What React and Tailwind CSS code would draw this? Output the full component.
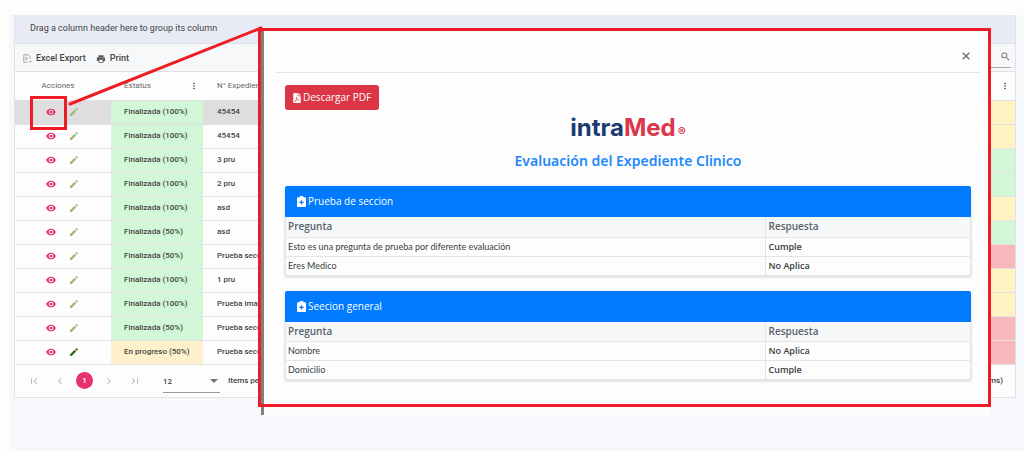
import React from "react";
import { MdSearch, MdPrint, MdMoreVert, MdFirstPage, MdLastPage, MdChevronLeft, MdChevronRight } from "react-icons/md";
import { FaFilePdf } from "react-icons/fa";

const rows = [
  { status: "Finalizada (100%)", file: "45454", flag: "yellow" },
  { status: "Finalizada (100%)", file: "45454", flag: "yellow" },
  { status: "Finalizada (100%)", file: "3 pru", flag: "green" },
  { status: "Finalizada (100%)", file: "2 pru", flag: "green" },
  { status: "Finalizada (100%)", file: "asd", flag: "yellow" },
  { status: "Finalizada (50%)", file: "asd", flag: "green" },
  { status: "Finalizada (50%)", file: "Prueba seccion", flag: "red" },
  { status: "Finalizada (100%)", file: "1 pru", flag: "yellow" },
  { status: "Finalizada (100%)", file: "Prueba imagen", flag: "yellow" },
  { status: "Finalizada (50%)", file: "Prueba seccion", flag: "red" },
  { status: "En progreso (50%)", file: "Prueba seccion", flag: "red", open: true },
];

const flags = { yellow: "bg-[#fff3c1]", green: "bg-[#d2f7d6]", red: "bg-[#f9b9bc]" };

const sections = [
  {
    title: "Prueba de seccion",
    items: [
      ["Esto es una pregunta de prueba por diferente evaluación", "Cumple"],
      ["Eres Medico", "No Aplica"],
    ],
  },
  {
    title: "Seecion general",
    items: [
      ["Nombre", "No Aplica"],
      ["Domicilio", "Cumple"],
    ],
  },
];

function ExcelIcon() {
  return (
    <svg viewBox="0 0 16 16" className="size-[9px]" fill="none" stroke="#888" strokeWidth="1.3">
      <path d="M12.500 9V4.500L9.500 1.500H1.500v13h7M4 5.500l4 5M8 5.500l-4 5M10.500 13.500h5" />
    </svg>
  );
}

function EyeIcon() {
  return (
    <svg viewBox="0 0 24 24" className="size-[10px]" fill="#e3306b">
      <path d="M12 4C6.500 4 2.200 7.300.5 12c1.700 4.700 6 8 11.500 8s9.800-3.300 11.500-8C21.800 7.300 17.500 4 12 4zm0 13.500a5.500 5.500 0 1 1 0-11 5.500 5.500 0 0 1 0 11zm0-8.700a3.200 3.200 0 1 0 0 6.400 3.200 3.200 0 0 0 0-6.400z" />
    </svg>
  );
}

function PencilIcon() {
  return (
    <svg viewBox="0 0 18 18" className="size-2" fill="currentColor">
      <path d="M0 14.200V18h3.800L14 7.800 10.200 4zM17.700 4.100a1 1 0 0 0 0-1.400L15.300.3a1 1 0 0 0-1.400 0L11.600 2.600l3.800 3.800z" />
    </svg>
  );
}

function ClipboardIcon() {
  return (
    <svg viewBox="0 0 18 22" className="h-[11px] w-[9px]" aria-hidden="true">
      <path fill="#fff" fillRule="evenodd" d="M5 2.500A2.500 2.500 0 0 1 7.500 0h3A2.500 2.500 0 0 1 13 2.500h3A2 2 0 0 1 18 4.500V20a2 2 0 0 1-2 2H2a2 2 0 0 1-2-2V4.500a2 2 0 0 1 2-2zM7.700 8.500v3H4.700v2.600h3v3h2.600v-3h3v-2.600h-3v-3z" />
    </svg>
  );
}

function Section({ title, items }) {
  return (
    <section className="rounded-[2px] shadow-[0_1px_3px_rgba(0,0,0,0.18)]">
      <h3 className="flex h-[31px] items-center gap-[2px] rounded-t-[2px] bg-[#007bff] px-3 text-[10px] font-medium text-white">
        <ClipboardIcon />
        {title}
      </h3>
      <table className="w-full table-fixed border-collapse text-left text-[#383d42]">
        <thead>
          <tr className="h-5 bg-[#f6f7f9] text-[10px] text-[#5b6168]">
            <th className="w-[70%] border border-t-0 border-[#e2e5ea] px-[2px] py-0 font-semibold">Pregunta</th>
            <th className="border border-t-0 border-[#e2e5ea] px-[3px] py-0 font-semibold">Respuesta</th>
          </tr>
        </thead>
        <tbody className="text-[9px]">
          {items.map(([question, answer]) => (
            <tr key={question} className="h-[19px]">
              <td className="border border-[#e2e5ea] px-[2px] py-0 font-['Lato',sans-serif]">{question}</td>
              <td className="border border-[#e2e5ea] px-[3px] py-0 font-semibold">{answer}</td>
            </tr>
          ))}
        </tbody>
      </table>
    </section>
  );
}

function Dialog() {
  return (
    <div className="absolute top-[28px] right-[33px] left-[258px] font-['Open_Sans',sans-serif]">
      <div role="dialog" aria-label="Evaluación del Expediente Clinico" className="border-[3px] border-[#ee1c25] bg-[#fdfdfd]">
        <div className="border-l-[3px] border-[#808080] pr-[7px] pb-6 pl-[11px]">
          <header className="flex h-[42px] items-center justify-end border-b border-[#e3e7f3] pt-2 pr-[11px]">
            <button type="button" aria-label="Cerrar">
              <svg viewBox="0 0 8 8" className="size-2" stroke="#777" strokeWidth="1.6">
                <path d="M.7.7l6.600 6.600M7.300.7L.7 7.300" />
              </svg>
            </button>
          </header>
          <div className="px-[10px] pt-3">
            <button type="button" className="flex h-[25px] items-center gap-[2px] rounded-[3px] bg-[#dc3545] px-2 text-[10px] font-medium text-white">
              <FaFilePdf className="h-[10px] w-2" />
              Descargar PDF
            </button>
            <div className="mt-[6px] flex h-6 items-center justify-center font-['Inter',sans-serif] text-[24px] font-bold text-[#1b3a70]">
              intra<span className="text-[#dc3648]">Med</span>
              <span className="mt-2 ml-[2px] text-[12px] text-[#dc3648]">®</span>
            </div>
            <h2 className="mt-[10px] mb-[14px] text-center font-['Noto_Sans',sans-serif] text-[14px] leading-[22px] font-semibold text-[#1e88fb]">Evaluación del Expediente Clinico</h2>
            <div className="flex flex-col gap-[15px]">
              {sections.map((s) => <Section key={s.title} {...s} />)}
            </div>
          </div>
        </div>
      </div>
      <div className="ml-[3px] h-[8px] rounded-br-[2px] border-l-[3px] border-[#808080] bg-[#fdfdfd]" />
    </div>
  );
}

export default function App() {
  return (
    <div className="relative min-h-screen overflow-hidden bg-[#fdfdfd] pt-[15px] pl-[9px] font-['Roboto',sans-serif] text-[#444]">
      <main className="min-h-[436px] bg-[#f7f8fb] pr-2 pl-[5px]">
        <div className="border border-t-0 border-[#e0e2e7] bg-[#fdfdfd]">
          <div className="flex h-[29px] items-center border-b border-[#dee1e8] bg-[#e8ebf5] px-[15px] text-[9px]">
            Drag a column header here to group its column
          </div>
          <div className="flex h-[28px] items-center justify-between border-b border-[#dfe0e3] bg-[#f7f8fa] pt-[2px] pr-1 pl-2 text-[9px] font-medium">
            <div className="flex gap-[10px]">
              <button type="button" className="flex items-center gap-1"><ExcelIcon />Excel Export</button>
              <button type="button" className="flex items-center gap-1"><MdPrint className="size-[10px] text-[#555]" />Print</button>
            </div>
            <label className="flex w-32 items-center border-b border-[#aaa] pb-1">
              <input type="search" aria-label="Buscar" className="min-w-0 flex-1 outline-none" />
              <MdSearch className="size-[11px] text-[#666]" />
            </label>
          </div>
          <table className="w-full table-fixed border-collapse text-left text-[8px]">
            <thead>
              <tr className="h-7 text-[#666]">
                <th className="w-24 p-0 pr-[10px] text-center font-normal">Acciones</th>
                <th className="w-[92px] py-0 pr-1 pl-[13px] font-normal">
                  <div className="flex items-center justify-between">Estatus<MdMoreVert className="size-[10px] text-[#333]" /></div>
                </th>
                <th className="py-0 pl-[14px] font-normal">N° Expediente</th>
                <th className="w-28 py-0 pr-[5px]"><MdMoreVert className="ml-auto size-[10px] text-[#333]" /></th>
              </tr>
            </thead>
            <tbody className="font-medium">
              {rows.map((r, i) => (
                <tr key={i} className={i === 0 ? "h-6 border-y border-[#e0e0e3] bg-[#dedede]" : "h-6 border-y border-[#e3e3e6]"}>
                  <td className="p-0">
                    <div className="flex items-center gap-[14px] pl-[31px]">
                      <button type="button" aria-label="Ver"><EyeIcon /></button>
                      <button type="button" aria-label="Editar" className={r.open ? "text-[#3d6b23]" : "text-[#9bbb83]"}><PencilIcon /></button>
                    </div>
                  </td>
                  <td className={r.open ? "bg-[#fff0cc] py-0 pl-[13px]" : "bg-[#d2f7d6] py-0 pl-[13px]"}>{r.status}</td>
                  <td className="py-0 pl-[14px]">{r.file}</td>
                  <td className={flags[r.flag]} />
                </tr>
              ))}
            </tbody>
          </table>
          <footer className="flex h-8 items-center justify-between pr-3 pl-[13px] text-[8px] font-medium">
            <nav aria-label="Paginación" className="flex items-center text-[#bbb]">
              <button type="button" aria-label="Primera"><MdFirstPage className="size-3" /></button>
              <button type="button" aria-label="Anterior" className="ml-[14px]"><MdChevronLeft className="size-3" /></button>
              <button type="button" className="ml-[10px] size-[17px] rounded-full bg-[#e6336f] text-white">1</button>
              <button type="button" aria-label="Siguiente" className="ml-[10px]"><MdChevronRight className="size-3" /></button>
              <button type="button" aria-label="Última" className="ml-[14px]"><MdLastPage className="size-3" /></button>
              <label className="relative ml-[22px] flex items-center text-[#444]">
                <select aria-label="Items per page" defaultValue="12" className="h-[24px] w-[57px] appearance-none border-b border-[#999] pt-[3px] text-[8px]">
                  <option>12</option>
                  <option>24</option>
                </select>
                <svg viewBox="0 0 8 4" className="pointer-events-none absolute right-[2px] h-1 w-2" fill="#777">
                  <path d="M0 0h8L4 4z" />
                </svg>
              </label>
              <span className="ml-2 text-[#444]">Items per page</span>
            </nav>
            <span>1 of 1 pages (11 items)</span>
          </footer>
        </div>
      </main>
      <Dialog />
      <div className="pointer-events-none absolute top-[96px] left-[30px] h-[34px] w-[37px] border-[3px] border-[#ee1c25]" />
      <svg className="pointer-events-none absolute top-0 left-0 h-[120px] w-[280px]" viewBox="0 0 280 120" aria-hidden="true">
        <path d="M70 104L261 28" stroke="#ee1c25" strokeWidth="3" strokeLinecap="round" />
      </svg>
    </div>
  );
}
